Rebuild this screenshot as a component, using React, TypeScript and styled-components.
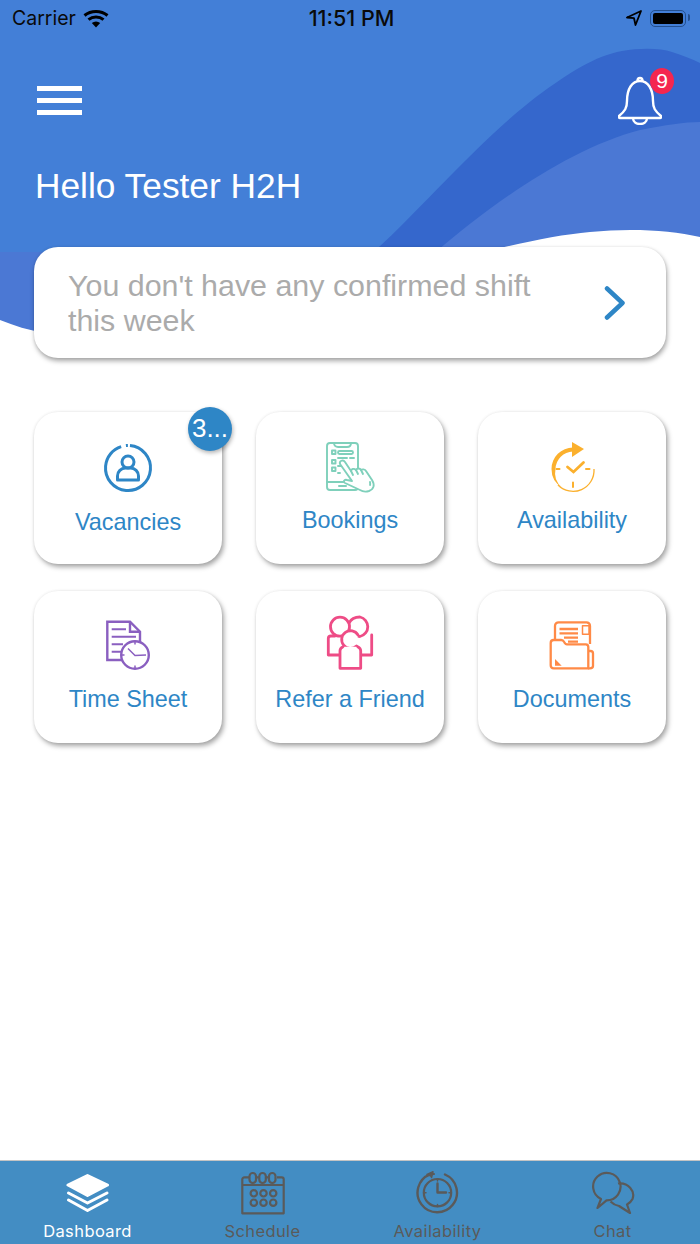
import styled, { createGlobalStyle } from 'styled-components';

const GlobalStyle = createGlobalStyle`
  html, body {
    margin: 0;
    padding: 0;
    background: #fff;
  }
  * {
    box-sizing: border-box;
  }
`;

const Page = styled.div`
  position: relative;
  width: 700px;
  height: 1244px;
  overflow: hidden;
  display: flex;
  flex-direction: column;
  background: #fff;
  font-family: 'Liberation Sans', Arial, sans-serif;
`;

const Waves = styled.svg`
  position: absolute;
  top: 0;
  left: 0;
  width: 700px;
  height: 340px;
`;

const Hero = styled.header`
  position: relative;
  height: 247px;
  display: flex;
  flex-direction: column;
`;

const StatusBar = styled.div`
  height: 36px;
  padding: 0 9px 0 12px;
  display: grid;
  grid-template-columns: 1fr auto 1fr;
  align-items: center;
  font-family: Inter, 'Liberation Sans', sans-serif;
  font-size: 19.5px;
  color: #0a0a0a;
`;

const StatusLeft = styled.div`
  display: flex;
  align-items: center;
  gap: 7px;
`;

const StatusRight = styled.div`
  display: flex;
  align-items: center;
  justify-content: flex-end;
  gap: 8px;
`;

const Clock = styled.span`
  font-size: 21.5px;
  font-weight: 500;
`;

const Battery = styled.div`
  position: relative;
  width: 36px;
  height: 17px;
  padding: 2px;
  border: 1.5px solid #24508f;
  border-radius: 5px;
  margin-right: 5px;

  &::before {
    content: '';
    display: block;
    height: 100%;
    background: #000;
    border-radius: 2px;
  }

  &::after {
    content: '';
    position: absolute;
    top: 3.5px;
    right: -5px;
    width: 2px;
    height: 7px;
    background: #24508f;
    border-radius: 0 2px 2px 0;
  }
`;

const TopBar = styled.div`
  margin-top: 32px;
  height: 57px;
  padding: 0 26px 0 37px;
  display: flex;
  align-items: center;
  justify-content: space-between;
`;

const MenuButton = styled.div`
  width: 45px;
  display: flex;
  flex-direction: column;
  gap: 6.5px;
  margin-top: 8px;
`;

const MenuBar = styled.span`
  display: block;
  height: 5.5px;
  background: #fff;
`;

const BellWrap = styled.div`
  position: relative;
  width: 44px;
  height: 50px;
  margin-top: 7px;
  margin-right: 12px;
`;

const BellBadge = styled.span`
  position: absolute;
  top: -7px;
  right: -12px;
  width: 24px;
  height: 26px;
  border-radius: 50%;
  background: #f5264f;
  color: #fff;
  font-size: 21px;
  line-height: 26px;
  text-align: center;
`;

const Greeting = styled.h1`
  margin: 41px 0 0 35px;
  font-size: 35.3px;
  line-height: 40px;
  font-weight: 400;
  color: #fff;
`;

const Main = styled.main`
  position: relative;
  padding: 0 34px;
`;

const ShiftCard = styled.div`
  height: 111px;
  padding: 0 40px 0 34px;
  display: flex;
  align-items: center;
  justify-content: space-between;
  background: #fff;
  border-radius: 24px;
  box-shadow: 1px 3px 5px rgba(0, 0, 0, 0.35), 0 0 3px rgba(0, 0, 0, 0.08);
`;

const ShiftText = styled.p`
  margin: 0;
  width: 480px;
  font-size: 30.4px;
  line-height: 35px;
  color: #ababab;
`;

const TileGrid = styled.div`
  margin-top: 54px;
  display: grid;
  grid-template-columns: repeat(3, 188px);
  grid-auto-rows: 152px;
  column-gap: 34px;
  row-gap: 27px;
`;

const Tile = styled.div`
  position: relative;
  padding-top: 24px;
  display: flex;
  flex-direction: column;
  align-items: center;
  background: #fff;
  border-radius: 24px;
  box-shadow: 2px 3px 5px rgba(0, 0, 0, 0.35), 0 0 3px rgba(0, 0, 0, 0.08);
`;

const TileIcon = styled.svg`
  width: 60px;
  height: 62px;
  flex: none;
`;

const TileLabel = styled.span<{ $drop?: number }>`
  margin-top: ${(p) => 8 + (p.$drop ?? 0)}px;
  font-size: 23.4px;
  line-height: 28px;
  color: #2e86c6;
  white-space: nowrap;
`;

const CountBadge = styled.span`
  position: absolute;
  top: -5px;
  right: -10px;
  width: 44px;
  height: 44px;
  border-radius: 50%;
  background: #2e86c6;
  color: #fff;
  font-size: 26px;
  line-height: 42px;
  text-align: center;
  box-shadow: 1px 2px 4px rgba(0, 0, 0, 0.3);
`;

const TabBar = styled.nav`
  position: relative;
  margin-top: auto;
  height: 84px;
  flex: none;
  display: grid;
  grid-template-columns: repeat(4, 175px);
  background: #438dc3;
  border-top: 1px solid #c4c4c4;
`;

const Tab = styled.div<{ $active?: boolean }>`
  padding-top: 10px;
  display: flex;
  flex-direction: column;
  align-items: center;
  color: ${(p) => (p.$active ? '#fff' : '#5a5a5a')};
  font-family: Inter, 'Liberation Sans', sans-serif;
  font-size: 16.5px;
  letter-spacing: 0.4px;
`;

const TabIcon = styled.svg`
  width: 44px;
  height: 44px;
  flex: none;
`;

const TabLabel = styled.span`
  margin-top: 6px;
  line-height: 20px;
`;

function WifiIcon() {
  return (
    <svg width="26" height="19" viewBox="0 0 26 19" fill="none" stroke="#000" strokeWidth="3">
      <path d="M1.500 6.500C8 1 18 1 24.500 6.500" />
      <path d="M5.500 10.700C9.800 7 16.200 7 20.500 10.700" />
      <path d="M13 18.500L8.800 14a6.400 6.400 0 0 1 8.400 0Z" fill="#000" stroke="none" />
    </svg>
  );
}

function LocationIcon() {
  return (
    <svg width="16" height="16" viewBox="0 0 16 16" fill="none" stroke="#000" strokeWidth="1.800" strokeLinejoin="round">
      <path d="M15 1L1 7.500L8 8.200L9.500 15Z" />
    </svg>
  );
}

function BellIcon() {
  return (
    <svg width="44" height="50" viewBox="0 0 44 50" fill="none" stroke="#fff" strokeWidth="2.400" strokeLinejoin="round">
      <path d="M19.500 6c0-4 5-4 5 0" />
      <path d="M9 26c0-12 5-20 13-20s13 8 13 20c0 7 2 10 8 15 .7.8.3 2-1 2H2c-1.300 0-1.700-1.200-1-2 6-5 8-8 8-15Z" />
      <path d="M15 43c0 8 14 8 14 0" />
    </svg>
  );
}

function Chevron() {
  return (
    <svg width="22" height="34" viewBox="0 0 22 34" fill="none" stroke="#2e86c6" strokeWidth="4.500" strokeLinecap="round" strokeLinejoin="round">
      <path d="M3 2.500L18.500 17L3 31.500" />
    </svg>
  );
}

function VacanciesIcon() {
  return (
    <TileIcon viewBox="0 0 60 62" fill="none" stroke="#2e86c6" strokeWidth="3">
      <circle cx="30" cy="32" r="22.500" strokeDasharray="131.600 4.700 2 3.100" transform="rotate(-85 30 32)" />
      <circle cx="30" cy="26" r="6" />
      <path d="M19.500 44v-4a8 8 0 0 1 8-8h5a8 8 0 0 1 8 8v4Z" strokeLinejoin="round" />
    </TileIcon>
  );
}

function BookingsIcon() {
  return (
    <TileIcon viewBox="0 0 60 62" fill="none" stroke="#7fd0bb" strokeWidth="1.900" strokeLinecap="round" strokeLinejoin="round">
      <rect x="7" y="7" width="31" height="47" rx="3" />
      <path d="M14 7c0 3 2 4 4 4h9c2 0 4-1 4-4" />
      <path d="M7 46h31" />
      <path d="M19 50h7" strokeWidth="2" />
      <rect x="12" y="14.500" width="3.500" height="3.500" />
      <rect x="12" y="24" width="3.500" height="3.500" />
      <rect x="12" y="31.500" width="3.500" height="3.500" />
      <rect x="18" y="15" width="15" height="3" rx="1.500" />
      <path d="M18 22h9M30 22h4M18 30h3M18 37h2" />
      <path
        fill="#fff"
        d="M20 28c-1-3 3-5 5-2l6 9c0-2 3-3 5-1 1-2 4-2 5 0 1-1 4-1 5 1l6 9c3 5 2 9-3 11-3 1-6 1-9-1l-15-7c-2-1-1-4 2-3l5 1Z"
      />
      <path d="M31 35l2 4M36 34l2 4M41 34l2 4M50 46c0 1 .5 2 0 3" />
    </TileIcon>
  );
}

function AvailabilityIcon() {
  return (
    <TileIcon viewBox="0 0 60 62" fill="#fbb02d">
      <path d="M31 11.500A21.500 21.500 0 0 0 9.500 33A21.500 21.500 0 0 0 20 51.500A19 19 0 0 1 13.500 33A18 18 0 0 1 31 15.500Z" />
      <path d="M30 6L42 13L30 21Z" />
      <path d="M16 49A21 21 0 0 0 52 33" fill="none" stroke="#fbb02d" strokeWidth="1.300" />
      <g fill="none" stroke="#fbb02d" strokeWidth="2" strokeLinecap="round">
        <path d="M14.500 33h3M44 33h3.500M31 46.500v4.500" />
        <path d="M25.500 31l6 5 10-9.500" strokeWidth="2.800" />
      </g>
    </TileIcon>
  );
}

function TimeSheetIcon() {
  return (
    <TileIcon viewBox="0 0 60 62" fill="none" stroke="#8a5fc0" strokeWidth="2.400">
      <path d="M42 28V16.700L32 6.700H9.300V45H24" />
      <path d="M32 6.700V16.700H42" />
      <path d="M13.700 14.300H28M13.700 21.700H38M13.700 29.300H25M13.700 36.700H23" strokeWidth="2" />
      <circle cx="37" cy="40" r="13.800" fill="#fff" />
      <path d="M30 33.500L37 40.500L48 40M37 26.500v3M37 50.500v3M23.500 40h3" strokeWidth="1.500" />
    </TileIcon>
  );
}

function ReferIcon() {
  return (
    <TileIcon viewBox="0 0 60 62" fill="none" stroke="#ee4c86" strokeWidth="2.800" strokeLinecap="round" strokeLinejoin="round">
      <circle cx="20" cy="11.700" r="9.500" />
      <path d="M29 8c2-4 6-6 11-6a10 10 0 0 1 0 19.500c-4 0-7-2-11-5" />
      <path d="M15 21H11c-1.500 0-2.700 1-2.700 2.500V40H20" />
      <path d="M51.700 20V40H40.500" />
      <path d="M38 20a8.800 8.800 0 1 0-1.500 11" fill="#fff" />
      <path d="M23 31.700c-2 1-3 2-3 4V53.300h20.700V35.700c0-2-1-3-3-4" fill="#fff" />
    </TileIcon>
  );
}

function DocumentsIcon() {
  return (
    <TileIcon viewBox="0 0 60 62" fill="none" stroke="#ff8a47" strokeWidth="2.300" strokeLinejoin="round">
      <path d="M13 25V11c0-2 1.500-3.700 3.700-3.700h27.800c2 0 3.500 1.700 3.500 3.700v18" />
      <rect x="40.500" y="10.700" width="6.500" height="8.500" fill="#fff" strokeWidth="1.500" />
      <path d="M17.500 14H36M17.500 18.300H36M22 22.700H36M26 26.700H36" />
      <path
        fill="#fff"
        d="M8.700 28c0-1.800 1.200-3 3-3h7.500c1.500 0 2.300.700 3 2l.8 1.300c.4.700 1 1 1.800 1h19c1.500 0 2.500 1 2.500 2.700V53.300H11.700c-1.800 0-3-1.200-3-3Z"
      />
      <path d="M47 36h1.500c1.500 0 2.500 1 2.500 2.500V51c0 1.500-1.500 2.300-3 2.300h-2" />
      <path d="M13 44L19.700 50.700H13Z" fill="#ff8a47" stroke="none" />
    </TileIcon>
  );
}

function LayersIcon() {
  return (
    <TabIcon viewBox="0 0 44 44" fill="none" stroke="#fff" strokeWidth="3" strokeLinecap="round" strokeLinejoin="round">
      <path d="M21.500 4.500L41.500 14L21.500 24.500L2 14Z" fill="#fff" />
      <path d="M2.500 22L21.500 32L41 22" />
      <path d="M2.500 29L21.500 39.500L41 29" />
    </TabIcon>
  );
}

function CalendarIcon() {
  return (
    <TabIcon viewBox="0 0 44 44" fill="none" stroke="#5a5a5a" strokeWidth="2.200" strokeLinejoin="round">
      <path d="M8 6.300H3.300c-1 0-2 1-2 2V42.300h41.400V8.300c0-1-1-2-2-2H36" />
      <path d="M1.300 14h41.400" />
      <rect x="8.500" y="2" width="6.500" height="10" rx="3.200" />
      <rect x="18.300" y="2" width="6.500" height="10" rx="3.200" />
      <rect x="28" y="2" width="6.500" height="10" rx="3.200" />
      <path d="M15 6.300h3.300M24.800 6.300H28" />
      {[12.8, 22.5, 32.2].map((cx) => (
        <g key={cx}>
          <circle cx={cx} cy="22.300" r="3.200" />
          <circle cx={cx} cy="31.700" r="3.200" />
        </g>
      ))}
    </TabIcon>
  );
}

function ClockCycleIcon() {
  return (
    <TabIcon viewBox="0 0 44 44" fill="none" stroke="#5a5a5a" strokeWidth="2.200" strokeLinecap="round" strokeLinejoin="round">
      <path d="M29 3.500A19.700 19.700 0 1 1 14 3.300" strokeWidth="2.400" />
      <path d="M11 3.500L17 0.800L15.500 6.500" fill="#5a5a5a" strokeWidth="1.500" />
      <path d="M14 3.300L18 3" strokeWidth="2" />
      <circle cx="21.500" cy="21.700" r="13.700" />
      <path d="M21.500 12.500V21.500H30" strokeWidth="2.400" />
      <path d="M21.500 8v2M21.500 33.500v2M8 21.700h2M33 21.700h2" strokeWidth="1.500" />
    </TabIcon>
  );
}

function ChatIcon() {
  return (
    <TabIcon viewBox="0 0 44 44" fill="none" stroke="#5a5a5a" strokeWidth="2.200" strokeLinejoin="round">
      <path d="M15.500 29.300A13.700 13.700 0 1 0 10 28L6.500 37Z" />
      <path d="M27 12.500C37 11 44.500 20 41.500 28C40 31 38 32.500 36 33.500L39 42L28 35C25 34.500 22 33 19.500 30.500" />
    </TabIcon>
  );
}

function App() {
  return (
    <Page>
      <GlobalStyle />
      <Waves viewBox="0 0 700 340">
        <rect width="700" height="340" fill="#437fd7" />
        <path d="M340 300L379 247C415 215 480 140 536 97C570 72 595 56 622 51C640 48 660 48 672 52C682 55 692 59 700 63V340Z" fill="#3567cc" />
        <path d="M0 252H436C490 205 570 148 640 130C665 125 685 122 700 122V340H0Z" fill="#4b78d4" />
        <path d="M0 320C60 345 130 340 220 320C360 290 500 240 590 232C630 228 670 230 700 237V340H0Z" fill="#fff" />
      </Waves>

      <Hero>
        <StatusBar>
          <StatusLeft>
            <span>Carrier</span>
            <WifiIcon />
          </StatusLeft>
          <Clock>11:51 PM</Clock>
          <StatusRight>
            <LocationIcon />
            <Battery />
          </StatusRight>
        </StatusBar>
        <TopBar>
          <MenuButton>
            <MenuBar />
            <MenuBar />
            <MenuBar />
          </MenuButton>
          <BellWrap>
            <BellIcon />
            <BellBadge>9</BellBadge>
          </BellWrap>
        </TopBar>
        <Greeting>Hello Tester H2H</Greeting>
      </Hero>

      <Main>
        <ShiftCard>
          <ShiftText>You don't have any confirmed shift this week</ShiftText>
          <Chevron />
        </ShiftCard>

        <TileGrid>
          <Tile>
            <VacanciesIcon />
            <TileLabel $drop={2}>Vacancies</TileLabel>
            <CountBadge>3...</CountBadge>
          </Tile>
          <Tile>
            <BookingsIcon />
            <TileLabel>Bookings</TileLabel>
          </Tile>
          <Tile>
            <AvailabilityIcon />
            <TileLabel>Availability</TileLabel>
          </Tile>
          <Tile>
            <TimeSheetIcon />
            <TileLabel>Time Sheet</TileLabel>
          </Tile>
          <Tile>
            <ReferIcon />
            <TileLabel>Refer a Friend</TileLabel>
          </Tile>
          <Tile>
            <DocumentsIcon />
            <TileLabel>Documents</TileLabel>
          </Tile>
        </TileGrid>
      </Main>

      <TabBar>
        <Tab $active>
          <LayersIcon />
          <TabLabel>Dashboard</TabLabel>
        </Tab>
        <Tab>
          <CalendarIcon />
          <TabLabel>Schedule</TabLabel>
        </Tab>
        <Tab>
          <ClockCycleIcon />
          <TabLabel>Availability</TabLabel>
        </Tab>
        <Tab>
          <ChatIcon />
          <TabLabel>Chat</TabLabel>
        </Tab>
      </TabBar>
    </Page>
  );
}

export default App;
